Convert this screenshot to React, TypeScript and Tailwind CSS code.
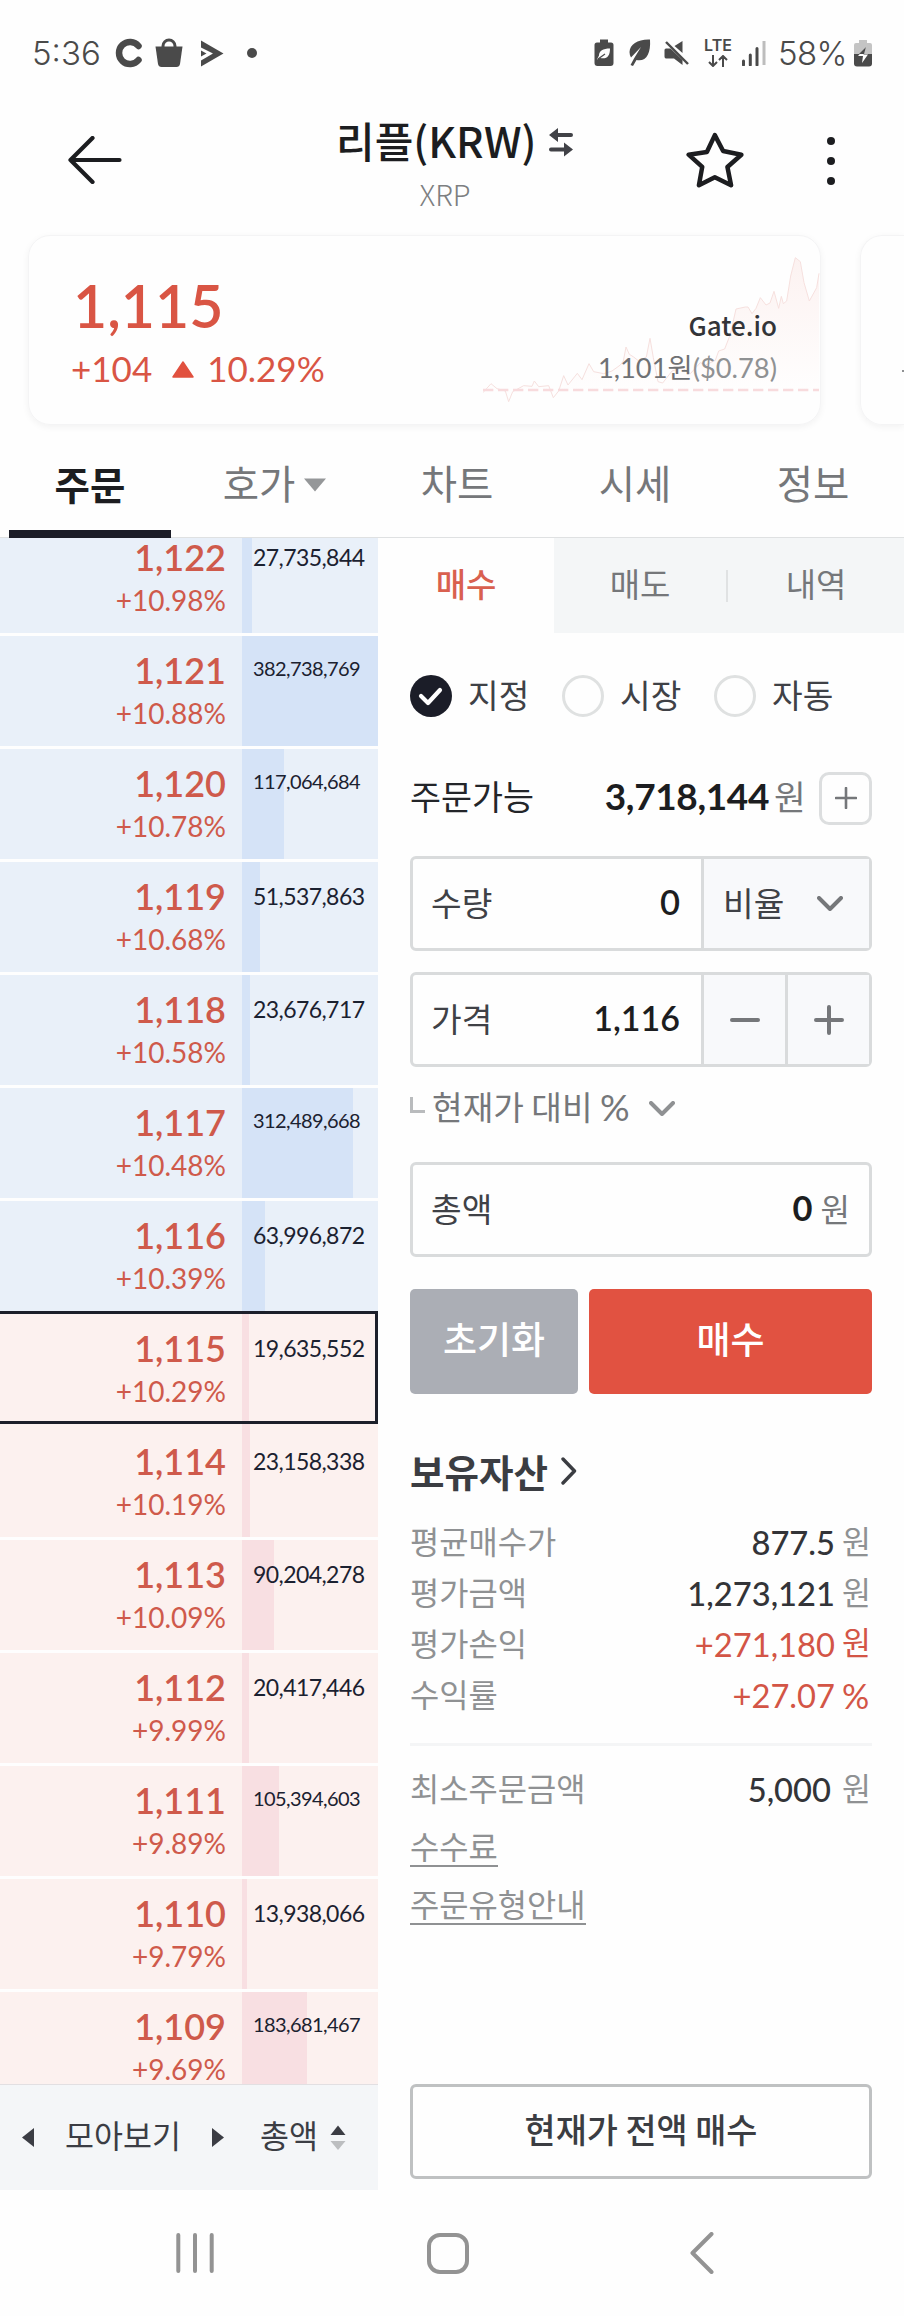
import React, { useState } from 'react';

interface OrderRow {
  price: string;
  rate: string;
  amount: number;
  side: 'ask' | 'bid';
}

const rows: OrderRow[] = [
  { price: '1,122', rate: '+10.98%', amount: 27735844, side: 'ask' },
  { price: '1,121', rate: '+10.88%', amount: 382738769, side: 'ask' },
  { price: '1,120', rate: '+10.78%', amount: 117064684, side: 'ask' },
  { price: '1,119', rate: '+10.68%', amount: 51537863, side: 'ask' },
  { price: '1,118', rate: '+10.58%', amount: 23676717, side: 'ask' },
  { price: '1,117', rate: '+10.48%', amount: 312489668, side: 'ask' },
  { price: '1,116', rate: '+10.39%', amount: 63996872, side: 'ask' },
  { price: '1,115', rate: '+10.29%', amount: 19635552, side: 'bid' },
  { price: '1,114', rate: '+10.19%', amount: 23158338, side: 'bid' },
  { price: '1,113', rate: '+10.09%', amount: 90204278, side: 'bid' },
  { price: '1,112', rate: '+9.99%', amount: 20417446, side: 'bid' },
  { price: '1,111', rate: '+9.89%', amount: 105394603, side: 'bid' },
  { price: '1,110', rate: '+9.79%', amount: 13938066, side: 'bid' },
  { price: '1,109', rate: '+9.69%', amount: 183681467, side: 'bid' },
];

const currentPrice = '1,115';
const maxAmount = Math.max(...rows.map((r) => r.amount));

const StatusBar = () => (
  <div className="flex h-[106px] shrink-0 items-center pl-[32px] pr-[32px] font-['Inter',sans-serif] text-[33px] font-light text-[#4a4a4a]">
    <span className="w-[83px] whitespace-nowrap pt-[2px]">5:36</span>
    <svg width="28" height="30" viewBox="0 0 28 30">
      <path d="M23.500 8A11 11 0 1 0 23.500 22" fill="none" stroke="#4a4a4a" strokeWidth="6.500" strokeLinecap="round" />
    </svg>
    <svg className="ml-[12px]" width="28" height="30" viewBox="0 0 28 30">
      <path d="M8 10V8a6 6 0 0 1 12 0v2" fill="none" stroke="#4a4a4a" strokeWidth="3" />
      <path d="M0.500 8.500h27L25 26q-.6 3-3.500 3h-15Q3.600 29 3 26Z" fill="#4a4a4a" />
    </svg>
    <svg className="ml-[18px]" width="23" height="27" viewBox="0 0 23 27">
      <path d="M0 0.500 22.500 13.500 0 26.500V20.500L12 13.500 0 7.500Z" fill="#4a4a4a" />
      <path d="M0 10.500 5.500 13.500 0 16.500Z" fill="#4a4a4a" />
    </svg>
    <span className="ml-[23px] h-[10px] w-[10px] rounded-full bg-[#4a4a4a]" />

    <svg className="ml-auto" width="20" height="28" viewBox="0 0 20 28">
      <path d="M6 0.500h8v3h3q2.500 0 2.500 2.500v18q0 3-3 3H3.500q-3 0-3-3V6q0-2.500 2.500-2.500h3Z" fill="#4a4a4a" />
      <path d="M16 9.500C9 9.500 5 12 5 16.500l-2 4 3-1.500c7 1.500 10-2 10-9.500Z" fill="#fff" />
      <path d="m4 20 7-5" stroke="#4a4a4a" strokeWidth="1.200" />
    </svg>
    <svg className="ml-[15px]" width="22" height="28" viewBox="0 0 22 28">
      <path d="M21 0.500C9 0 1 5 0.500 13q0 3 1.500 5.500L12 8 5 19.500 1.500 26l2.500 1 3.500-6C17 23 22 15 21 .5Z" fill="#4a4a4a" />
    </svg>
    <svg className="ml-[13px]" width="26" height="27" viewBox="0 0 26 27">
      <path d="M18.500 1v12L10.500 6ZM2 8.500h4.500L18.500 20v5L10 18.500H2q-1.500 0-1.500-2V10q0-1.500 1.500-1.500Z" fill="#4a4a4a" />
      <path d="m2 2 22 22" stroke="#4a4a4a" strokeWidth="2.400" />
    </svg>
    <div className="ml-[14px] flex w-[28px] flex-col items-center">
      <span className="text-[16px] font-semibold leading-[13px]">LTE</span>
      <svg className="mt-[3px]" width="20" height="12" viewBox="0 0 20 12">
        <path d="M5 0v11M1 7l4 4 4-4M15 12V1M11 5l4-4 4 4" fill="none" stroke="#4a4a4a" strokeWidth="2" />
      </svg>
    </div>
    <svg className="ml-[10px]" width="24" height="25" viewBox="0 0 24 25">
      <path d="M1.500 20v4M8.300 14v10M15 7.500V24" stroke="#4a4a4a" strokeWidth="3" strokeLinecap="round" />
      <path d="M22 0v24" stroke="#bdbdbd" strokeWidth="3" />
    </svg>
    <span className="ml-[12px] w-[76px] whitespace-nowrap pt-[2px] tracking-[-0.02em]">58%</span>
    <svg width="18" height="27" viewBox="0 0 18 27">
      <path d="M5 0h8v3h3q2 0 2 2v9H0V5q0-2 2-2h3Z" fill="#c4c4c4" />
      <path d="M0 14h18v9.500q0 3-3 3H3q-3 0-3-3Z" fill="#4a4a4a" />
      <path d="m12 7-8 9h5l-1 7 6-8.500H9.500Z" fill="#fff" />
      <path d="m12 7-7 7h5Z" fill="#4a4a4a" />
    </svg>
  </div>
);

const Header = () => (
  <div className="flex h-[129px] shrink-0 items-start">
    <svg className="ml-[68px] mt-[30px]" width="54" height="48" viewBox="0 0 54 48">
      <path d="M24.500 2 2.500 24l22 22M2.500 24h49" fill="none" stroke="#1c1d20" strokeWidth="4.200" strokeLinecap="round" strokeLinejoin="round" />
    </svg>
    <div className="ml-[214px] w-[238px]">
      <div className="flex items-center">
        <h1 className="w-[213px] whitespace-nowrap text-[42px] font-medium leading-[67px] text-[#1c1d20]">리플(KRW)</h1>
        <svg className="mt-[4px]" width="24" height="30" viewBox="0 0 24 30">
          <path d="M8 8h14M2 22.500h14" stroke="#414247" strokeWidth="4" strokeLinecap="round" />
          <path d="M0 8 9 1v14ZM24 22.500l-9-7v14Z" fill="#414247" />
        </svg>
      </div>
      <p className="w-[218px] pt-[3px] text-center text-[29px] font-light leading-[34px] text-[#7d7f81]">XRP</p>
    </div>
    <svg className="ml-[112px] mt-[26px]" width="58" height="56" viewBox="700 395 175 168">
      <path d="M787 404 812 452 867 463 825 500 836 555 787 531 739 555 749 500 708 463 763 455Z" fill="none" stroke="#1c1d20" strokeWidth="13.500" strokeLinejoin="round" />
    </svg>
    <div className="ml-[83px] mt-[31px] flex flex-col gap-[12px]">
      <span className="h-[8px] w-[8px] rounded-full bg-[#1c1d20]" />
      <span className="h-[8px] w-[8px] rounded-full bg-[#1c1d20]" />
      <span className="h-[8px] w-[8px] rounded-full bg-[#1c1d20]" />
    </div>
  </div>
);

const chartLine =
  'M93 515 117 488 135 503 160 510 170 542 182 512 215 494 240 496 247 480 260 497 290 494 304 530 320 510 335 464 348 492 376 457 390 476 411 428 425 452 455 458 480 450 505 432 514 420 522 378 532 400 545 408 560 420 583 408 594 352 604 410 618 482 632 486 660 450 690 440 715 458 745 425 760 432 790 418 800 390 818 384 835 340 852 264 880 258 888 258 900 278 912 262 925 230 942 252 954 246 966 211 980 262 988 226 994 248 1004 240 1016 165 1030 110 1045 122 1056 185 1072 240 1094 200 1101 157';

const PriceCards = () => (
  <div className="flex h-[190px] shrink-0 gap-[39px] overflow-visible pl-[28px]">
    <div className="relative flex w-[793px] shrink-0 items-start justify-between overflow-hidden rounded-[22px] border border-[#f4f4f5] shadow-[0_2px_7px_rgba(0,0,0,0.05)]">
      <svg className="absolute right-0 top-0" width="337" height="189" viewBox="93 45 1011 567">
        <defs>
          <linearGradient id="area" x1="0" y1="0" x2="0" y2="1">
            <stop offset="0" stopColor="#fbeae8" />
            <stop offset="1" stopColor="#fff" />
          </linearGradient>
        </defs>
        <path d={chartLine + 'V507H93Z'} fill="url(#area)" opacity="0.6" />
        <path d={chartLine} fill="none" stroke="#f6e0de" strokeWidth="3" />
        <path d="M93 507H1101" stroke="#f8dbdd" strokeWidth="8" strokeDasharray="31 14" />
      </svg>
      <div className="relative pl-[42px] font-['Lato',sans-serif] text-[#d95544]">
        <p className="mt-[35px] pl-[2px] text-[59px] font-semibold leading-[70px]">1,115</p>
        <div className="flex items-center text-[35px] leading-[54px]">
          <span>+104</span>
          <svg className="ml-[20px] mr-[13px] mt-[2px]" width="22" height="17" viewBox="0 0 22 17">
            <path d="M11 1 21 16H1Z" fill="#e1513f" stroke="#e1513f" strokeWidth="1.500" strokeLinejoin="round" />
          </svg>
          <span>10.29%</span>
        </div>
      </div>
      <div className="relative mr-[43px] mt-[68px] text-right">
        <p className="text-[26px] font-medium leading-[42px] text-[#333438]">Gate.io</p>
        <p className="font-['Lato','Noto_Sans_CJK_KR',sans-serif] text-[27.300px] leading-[44px] text-[#6f7174]">
          1,101원<span className="text-[#8f9193]">($0.78)</span>
        </p>
      </div>
    </div>
    <div className="flex w-[44px] shrink-0 items-center justify-end rounded-l-[22px] border border-r-0 border-[#f4f4f5] pt-[82px] shadow-[0_2px_7px_rgba(0,0,0,0.05)]">
      <span className="h-[2px] w-[2px] bg-[#8f9193]" />
    </div>
  </div>
);

const MainTabs = () => (
  <nav className="flex h-[113px] shrink-0 border-b border-[#dfe1e2] text-[39.500px] leading-[60px] text-[#75777a]">
    <div className="flex w-[180px] flex-col items-center pt-[28px]">
      <span className="text-[38.500px] font-bold text-[#1c1d20]">주문</span>
      <span className="mt-[17px] h-[8px] w-[162px] shrink-0 bg-[#1b1d28]" />
    </div>
    <div className="flex w-[189px] items-start justify-center pt-[27px]">
      호가
      <svg className="ml-[9px] mt-[26px]" width="22" height="14" viewBox="0 0 22 14">
        <path d="M0 0.500h22L11 13.500Z" fill="#959799" />
      </svg>
    </div>
    <span className="w-[176px] pt-[27px] text-center">차트</span>
    <span className="w-[180px] pt-[27px] text-center">시세</span>
    <span className="w-[176px] pt-[27px] text-center">정보</span>
  </nav>
);

const OrderBookRow = ({ row }: { row: OrderRow }) => {
  const current = row.price === currentPrice;
  const ask = row.side === 'ask';
  const small = row.amount >= 100000000;
  // the selected row and its neighbour close up the gap around the outline
  const joined = current || row.price === '1,114';
  return (
    <div
      className={`flex shrink-0 ${joined ? 'h-[113px]' : 'h-[110px]'} ${row.price === '1,116' || current ? '' : 'mb-[3px]'} ${
        ask ? 'bg-[#e9f0f9]' : 'bg-[#fcf1ef]'
      } ${current ? 'border-y-[3px] border-r-[3px] border-[#1c1f2a]' : joined ? 'pt-[3px]' : ''}`}
    >
      <div className="w-[242px] shrink-0 pr-[16px] pt-[14px] text-right text-[#cf5a4b]">
        <p className="text-[36px] font-semibold leading-[40px]">{row.price}</p>
        <p className="mt-[3px] text-[28px] leading-[40px]">{row.rate}</p>
      </div>
      <div className={`relative w-[136px] ${current ? '' : joined ? '-mt-[3px] pt-[3px]' : ''}`}>
        <div
          className={`absolute inset-y-0 left-0 ${ask ? 'bg-[#d5e3f7]' : 'bg-[#f8dfe2]'}`}
          style={{ width: Math.round((row.amount / maxAmount) * 136) }}
        />
        <p
          className={`relative whitespace-nowrap pl-[11px] leading-[34px] text-[#1b2130] ${
            small ? 'pt-[15px] text-[20px] tracking-[-0.03em]' : 'pt-[17px] text-[23px] tracking-[-0.025em]'
          }`}
        >
          {row.amount.toLocaleString('en-US')}
        </p>
      </div>
    </div>
  );
};

const OrderBook = () => (
  <div className="flex w-[378px] shrink-0 flex-col">
    <div className="flex h-[1546px] flex-col justify-start overflow-hidden font-['Lato',sans-serif]">
      <div className="-mt-[15px] flex flex-col">
        {rows.map((r) => (
          <OrderBookRow key={r.price} row={r} />
        ))}
      </div>
    </div>
    <div className="flex h-[106px] items-center border-t border-[#e2dfe2] bg-[#f4f6f8] pl-[22px] text-[31.500px] text-[#3b3d44]">
      <svg width="12" height="19" viewBox="0 0 12 19">
        <path d="M12 0v19L0 9.500Z" fill="#3b3d44" />
      </svg>
      <span className="ml-[31px] w-[147px] whitespace-nowrap pb-[5px]">모아보기</span>
      <svg width="12" height="19" viewBox="0 0 12 19">
        <path d="M0 0v19l12-9.500Z" fill="#3b3d44" />
      </svg>
      <span className="ml-[36px] pb-[5px]">총액</span>
      <svg className="ml-[12px]" width="16" height="26" viewBox="0 0 16 26">
        <path d="M8 0.500 15.500 10H.5Z" fill="#3b3d44" />
        <path d="M8 25 15.500 16H.5Z" fill="#bcbec0" />
      </svg>
    </div>
  </div>
);

const Chevron = ({ color }: { color: string }) => (
  <svg width="26" height="15" viewBox="0 0 26 15">
    <path d="m2 2 11 11L24 2" fill="none" stroke={color} strokeWidth="4" strokeLinecap="round" strokeLinejoin="round" />
  </svg>
);

const Radio = ({ label, checked, onClick }: { label: string; checked: boolean; onClick: () => void }) => (
  <button className="flex w-[152px] items-center" onClick={onClick}>
    {checked ? (
      <svg width="42" height="42" viewBox="0 0 42 42">
        <circle cx="21" cy="21" r="21" fill="#1b1d28" />
        <path d="m11 21 7 7 12-13" fill="none" stroke="#fff" strokeWidth="4.200" strokeLinecap="round" strokeLinejoin="round" />
      </svg>
    ) : (
      <span className="h-[42px] w-[42px] rounded-full border-[3px] border-[#dfe1e1]" />
    )}
    <span className="ml-[16px] pb-[4px] text-[33.300px] text-[#3f4146]">{label}</span>
  </button>
);

const InfoRow = ({ label, value, unit, up, spaced }: { label: string; value: string; unit: string; up?: boolean; spaced?: boolean }) => (
  <div className="flex h-[51px] items-center">
    <span className="mr-auto pb-[1px] text-[#8f9193]">{label}</span>
    <span className={`pt-[2px] font-['Lato',sans-serif] text-[32.700px] ${up ? 'text-[#d35546]' : 'font-medium text-[#333438]'}`}>{value}</span>
    <span
      className={`w-[30px] text-[31.500px] ${spaced ? 'ml-[11px]' : 'ml-[7px]'} ${
        up ? "font-['Lato','Noto_Sans_CJK_KR',sans-serif] text-[#d35546]" : 'pb-[1px] text-[#8f9193]'
      } ${unit === '%' ? 'pt-[2px] text-[34px]' : ''}`}
    >
      {unit}
    </span>
  </div>
);

const OrderForm = () => {
  const [type, setType] = useState('지정');

  return (
    <div className="flex w-[526px] flex-col">
      <div className="flex h-[95px] shrink-0 items-center text-[33px] text-[#75777a]">
        <span className="w-[176px] pb-[4px] text-center font-medium text-[#d9604f]">매수</span>
        <div className="flex h-[95px] w-[350px] items-center bg-[#f4f6f7]">
          <span className="w-[172px] pb-[4px] text-center">매도</span>
          <span className="h-[32px] w-[2px] bg-[#e0e2e3]" />
          <span className="w-[176px] pb-[4px] text-center">내역</span>
        </div>
      </div>

      <div className="flex grow flex-col pl-[32px] pr-[32px]">
        <div className="mt-[36px] flex h-[54px] items-center">
          {['지정', '시장', '자동'].map((t) => (
            <Radio key={t} label={t} checked={type === t} onClick={() => setType(t)} />
          ))}
        </div>

        <div className="mt-[48px] flex h-[54px] items-center text-[33.700px] text-[#232529]">
          <span className="mr-auto pb-[4px]">주문가능</span>
          <span className="pb-[4px] font-['Lato',sans-serif] text-[37px] font-bold tracking-[-0.01em] text-[#1c1d20]">3,718,144</span>
          <span className="ml-[5px] w-[45px] pb-[4px] text-[34.500px] text-[#75777a]">원</span>
          <button className="flex h-[53px] w-[53px] items-center justify-center rounded-[10px] border-[3px] border-[#dcdedf]">
            <svg width="22" height="22" viewBox="0 0 22 22">
              <path d="M11 1v20M1 11h20" stroke="#75777a" strokeWidth="2.600" strokeLinecap="round" />
            </svg>
          </button>
        </div>

        <div className="mt-[31px] flex h-[95px] shrink-0 rounded-[6px] border-[3px] border-[#d9dbdc] text-[33.300px] text-[#3f4146]">
          <div className="flex w-[288px] items-center justify-between pb-[4px] pl-[18px] pr-[21px]">
            <span>수량</span>
            <span className="font-['Lato',sans-serif] text-[34.500px] font-semibold text-[#1c1d20]">0</span>
          </div>
          <div className="flex grow items-center justify-between border-l-[3px] border-[#d9dbdc] bg-[#f8f9fb] pl-[19px] pr-[26px]">
            <span className="pb-[4px]">비율</span>
            <Chevron color="#75777a" />
          </div>
        </div>

        <div className="mt-[21px] flex h-[95px] shrink-0 rounded-[6px] border-[3px] border-[#d9dbdc] text-[33.300px] text-[#3f4146]">
          <div className="flex w-[288px] items-center justify-between pb-[4px] pl-[18px] pr-[21px]">
            <span>가격</span>
            <span className="font-['Lato',sans-serif] text-[34px] font-semibold text-[#1c1d20]">1,116</span>
          </div>
          <button className="flex w-[84px] items-center justify-center border-l-[3px] border-[#d9dbdc] bg-[#f8f9fb]">
            <svg width="30" height="30" viewBox="0 0 30 30">
              <path d="M2 15h26" stroke="#75777a" strokeWidth="4" strokeLinecap="round" />
            </svg>
          </button>
          <button className="flex w-[84px] items-center justify-center border-l-[3px] border-[#d9dbdc] bg-[#f8f9fb]">
            <svg width="30" height="30" viewBox="0 0 30 30">
              <path d="M2 15h26M15 2v26" stroke="#75777a" strokeWidth="4" strokeLinecap="round" />
            </svg>
          </button>
        </div>

        <div className="mt-[14px] flex h-[54px] items-center text-[33.300px] text-[#75777a]">
          <span className="mb-[6px] h-[16px] w-[15px] border-b-[3px] border-l-[3px] border-[#b9bbbd]" />
          <span className="ml-[7px] w-[168px] whitespace-nowrap pb-[4px]">현재가 대비</span>
          <span className="mr-[16px] w-[33px] pb-[3px] font-['Lato',sans-serif] text-[37px]">%</span>
          <Chevron color="#8f9193" />
        </div>

        <div className="mt-[27px] flex h-[95px] shrink-0 items-center rounded-[6px] border-[3px] border-[#d9dbdc] pb-[4px] pl-[18px] pr-[19px] text-[33.300px] text-[#3f4146]">
          <span className="mr-auto">총액</span>
          <span className="font-['Lato',sans-serif] text-[34.500px] font-bold text-[#1c1d20]">0</span>
          <span className="ml-[8px] text-[32px] text-[#75777a]">원</span>
        </div>

        <div className="mt-[32px] flex h-[105px] shrink-0 gap-[11px] text-[37px] font-medium text-white">
          <button className="w-[168px] rounded-[5px] bg-[#abaeb5] pb-[5px]">초기화</button>
          <button className="grow rounded-[5px] bg-[#e15241] pb-[5px]">매수</button>
        </div>

        <div className="mt-[50px] flex h-[54px] items-center text-[37.500px] font-bold text-[#3b3d42]">
          보유자산
          <svg className="ml-[13px]" width="16" height="28" viewBox="0 0 16 28">
            <path d="m2 2 11.500 12L2 26" fill="none" stroke="#3b3d42" strokeWidth="3.400" strokeLinecap="round" strokeLinejoin="round" />
          </svg>
        </div>

        <div className="mt-[18px] flex flex-col text-[31.800px]">
          <InfoRow label="평균매수가" value="877.5" unit="원" />
          <InfoRow label="평가금액" value="1,273,121" unit="원" />
          <InfoRow label="평가손익" value="+271,180" unit="원" up />
          <InfoRow label="수익률" value="+27.07" unit="%" up />
        </div>

        <div className="mt-[23px] h-[3px] shrink-0 bg-[#f4f5f6]" />

        <div className="mt-[17px] flex flex-col items-stretch text-[31.800px] text-[#8f9193]">
          <InfoRow label="최소주문금액" value="5,000" unit="원" spaced />
          <a className="mt-[13px] h-[40px] self-start border-b-2 border-[#8f9193] leading-[36px]">수수료</a>
          <a className="mt-[18px] h-[40px] self-start border-b-2 border-[#8f9193] leading-[36px]">주문유형안내</a>
        </div>

        <button className="mb-[11px] mt-auto h-[95px] rounded-[6px] border-[3px] border-[#bfc1c2] pb-[4px] text-[33.800px] font-medium text-[#3b3d42]">
          현재가 전액 매수
        </button>
      </div>
    </div>
  );
};

const NavBar = () => (
  <div className="flex h-[126px] shrink-0 items-center pl-[176px]">
    <svg width="38" height="40" viewBox="0 0 38 40">
      <path d="M2.300 2v36M19 2v36M35.700 2v36" stroke="#939393" strokeWidth="4" strokeLinecap="round" />
    </svg>
    <span className="ml-[213px] h-[41px] w-[42px] rounded-[13px] border-[4px] border-[#939393]" />
    <svg className="ml-[221px]" width="24" height="42" viewBox="0 0 24 42">
      <path d="M21.500 2 2.500 21l19 19" fill="none" stroke="#939393" strokeWidth="4" strokeLinecap="round" strokeLinejoin="round" />
    </svg>
  </div>
);

const App = () => {
  return (
    <div className="flex h-[2316px] w-[904px] flex-col overflow-hidden bg-[#fefefe] font-['Noto_Sans_CJK_KR',sans-serif]">
      <StatusBar />
      <Header />
      <PriceCards />
      <MainTabs />
      <div className="flex h-[1652px] shrink-0">
        <OrderBook />
        <OrderForm />
      </div>
      <NavBar />
    </div>
  );
};

export default App;
